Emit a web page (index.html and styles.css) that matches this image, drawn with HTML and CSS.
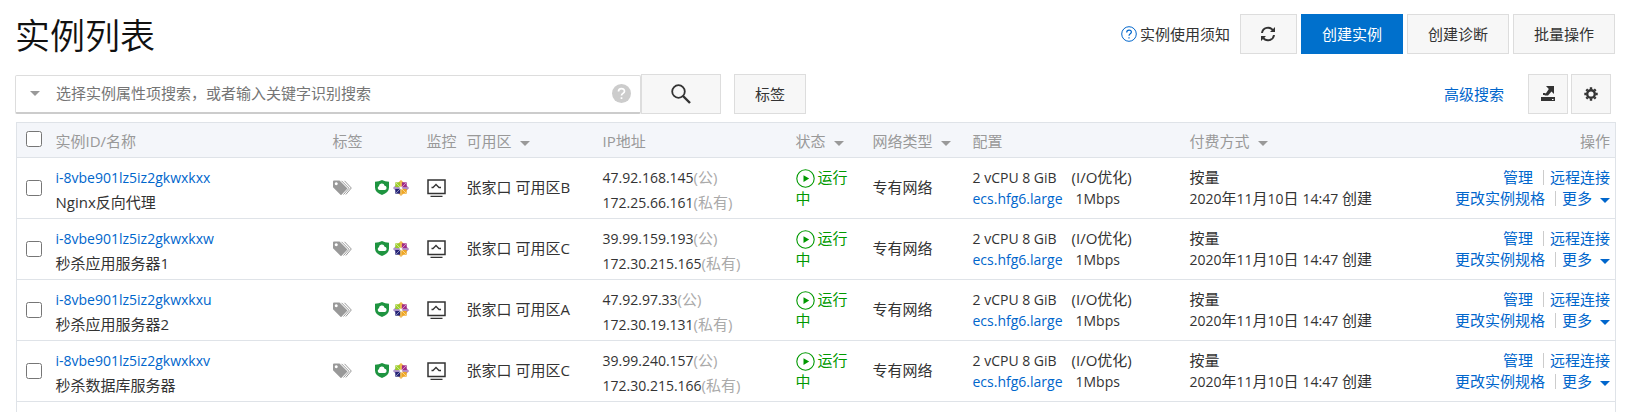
FILE: index.html
```html
<!DOCTYPE html>
<html lang="zh-CN">
<head>
<meta charset="utf-8">
<title>实例列表</title>
<link rel="stylesheet" href="styles.css">
<script src="app.js" defer></script>
</head>
<body>
<svg class="sprite" aria-hidden="true">
  <symbol id="i-tags" viewBox="0 0 19 16">
    <path fill="#999" fill-rule="evenodd" d="M0 1.5Q0 .5 1 .5H6.5L14.5 8.5 8.5 14.8Q8 15.3 7.5 14.8L0 7.3ZM3.2 2.3a1.5 1.5 0 1 0 .1 0Z"/>
    <path fill="none" stroke="#999" d="M8.5.8 16 8.3 10.5 14.5M11.5.8 18.3 8 12.8 14.5"/>
  </symbol>
  <symbol id="i-shield" viewBox="0 0 14 15">
    <path fill="#1e9440" d="M7 0Q10 1.8 14 1.8V7.5Q14 12.5 7 15 0 12.5 0 7.5V1.8Q4 1.8 7 0Z"/>
    <path fill="#fff" d="M4.500 10a2 2 0 0 1-.6-3.800 2.900 2.900 0 0 1 5.700-.5 2.200 2.200 0 0 1 .4 4.300Z"/>
  </symbol>
  <symbol id="i-centos" viewBox="0 0 16 16">
    <path fill="#efa724" d="m8 0 3 3L8 7 5 3Z"/>
    <path fill="#a05fae" d="m16 8-3 3L9 8l4-3Z"/>
    <path fill="#9a80bd" d="m0 8 3-3 4 3-4 3Z"/>
    <path fill="#efb04b" d="m8 16-3-3 3-4 3 4Z"/>
    <path fill="#9ccd2a" d="M2.300 2.300h5v5h-5Z"/>
    <path fill="#a12b88" d="M8.700 2.300h5v5h-5Z"/>
    <path fill="#262577" d="M2.300 8.700h5v5h-5Z"/>
    <path fill="#efa724" d="M8.700 8.700h5v5h-5Z"/>
    <path stroke="#fff" stroke-opacity=".7" stroke-width=".7" fill="none" d="M3 3l10 10M13 3 3 13"/>
    <path fill="#efc060" d="M7.300 1h1.400v5H7.300Z"/>
    <path fill="#b79bd0" d="M1 7.300h5v1.400H1ZM10 7.300h5v1.400h-5Z"/>
    <path fill="#efc060" d="M7.300 10h1.400v5H7.300Z"/>
  </symbol>
  <symbol id="i-monitor" viewBox="0 0 19 18">
    <path fill="none" stroke="#333" stroke-width="1.500" d="M1 1h17v13.500H1Z"/>
    <path fill="none" stroke="#333" stroke-width="1.300" d="M4.500 8.500H6L9 5.500l3 3h2M3.500 17.300h12"/>
  </symbol>
  <symbol id="i-run" viewBox="0 0 19 19">
    <circle cx="9.500" cy="9.500" r="8.700" fill="none" stroke="#090" stroke-width="1.100"/>
    <path fill="#090" d="m7.500 6.200 5.700 3.400-5.700 3.400Z"/>
  </symbol>
</svg>

<header class="head">
  <h1>实例列表</h1>
  <div class="head-actions">
    <a class="notice" href="#">
      <svg width="16" height="16" viewBox="0 0 16 16" aria-hidden="true"><circle cx="8" cy="8" r="7.300" fill="none" stroke="#06c"/><path d="M5.700 6.400C5.700 3.300 10.400 3.400 10.400 6.100 10.400 7.900 8 7.700 8 9.800M8 11.200v1.300" fill="none" stroke="#06c" stroke-width="1.200"/></svg>
      <span>实例使用须知</span>
    </a>
    <button class="btn refresh" type="button" aria-label="刷新">
      <svg width="16" height="16" viewBox="0 0 16 16" fill="none" stroke="#333" stroke-width="2" aria-hidden="true"><path d="M2 7A6 6 0 0 1 13 4.500M14 9A6 6 0 0 1 3 11.500"/><path fill="#333" stroke="none" d="M15 1v5H10ZM1 15v-5H6Z"/></svg>
    </button>
    <button class="btn primary" type="button">创建实例</button>
    <button class="btn" type="button">创建诊断</button>
    <button class="btn" type="button">批量操作</button>
  </div>
</header>

<div class="toolbar">
  <form class="search" onsubmit="return false">
    <div class="field">
      <span class="caret"></span>
      <input type="text" aria-label="搜索实例" placeholder="选择实例属性项搜索，或者输入关键字识别搜索">
      <svg width="19" height="19" viewBox="0 0 19 19" aria-hidden="true"><circle cx="9.500" cy="9.500" r="9.500" fill="#ccc"/><path d="M6.500 7.500C6.500 3.800 12.500 3.800 12.500 7.200 12.500 9.500 9.500 9.300 9.500 11.600M9.500 13.200v1.800" fill="none" stroke="#fff" stroke-width="1.700"/></svg>
    </div>
    <button class="btn find" type="submit" aria-label="搜索">
      <svg width="20" height="20" viewBox="0 0 20 20" fill="none" stroke="#333" aria-hidden="true"><circle cx="7.500" cy="7.500" r="6.300" stroke-width="1.800"/><path stroke-width="2.400" d="m12 12 7 7"/></svg>
    </button>
  </form>
  <button class="btn tag-btn" type="button">标签</button>
  <a class="advanced" href="#">高级搜索</a>
  <div class="tools">
    <button class="btn square" type="button" aria-label="导出">
      <svg width="14" height="16" viewBox="0 0 14 16" fill="#333" aria-hidden="true"><path d="M5 0h8v8l-2.500-2.500L7 9.500H3.500L7.800 3ZM2 7h2.500v2H2ZM0 11h14v4H0Z"/><path fill="#fff" d="M11 13h1.500v1H11Z"/></svg>
    </button>
    <button class="btn square" type="button" aria-label="设置">
      <svg width="14" height="14" viewBox="0 0 14 14" aria-hidden="true"><circle cx="7" cy="7" r="3.800" fill="none" stroke="#333" stroke-width="2.400"/><path stroke="#333" stroke-width="2.400" d="M7 .3v2M7 11.700v2M.3 7h2M11.700 7h2M2.300 2.300l1.400 1.400M10.300 10.300l1.400 1.400M2.300 11.700l1.400-1.400M10.300 3.700l1.400-1.400"/></svg>
    </button>
  </div>
</div>

<div class="list-wrap">
<table class="list">
  <colgroup>
    <col class="c-check"><col class="c-name"><col class="c-tag"><col class="c-mon"><col class="c-zone"><col class="c-ip"><col class="c-state"><col class="c-net"><col class="c-conf"><col class="c-pay"><col class="c-op">
  </colgroup>
  <thead>
    <tr>
      <th class="check"><input type="checkbox" aria-label="全选"></th>
      <th>实例ID/名称</th>
      <th>标签</th>
      <th>监控</th>
      <th>可用区<span class="caret"></span></th>
      <th>IP地址</th>
      <th>状态<span class="caret"></span></th>
      <th>网络类型<span class="caret"></span></th>
      <th>配置</th>
      <th>付费方式<span class="caret"></span></th>
      <th class="ops">操作</th>
    </tr>
  </thead>
  <tbody id="rows"></tbody>
</table>
</div>
</body>
</html>
```

FILE: styles.css
```css
* {
  box-sizing: border-box;
}

body {
  margin: 0;
  padding: 14px 10px 0 15px;
  background: #fff;
  color: #333;
  font-family: "Open Sans", "Noto Sans CJK SC", sans-serif;
  font-size: 15px;
  line-height: 21px;
}

a {
  color: #06c;
  text-decoration: none;
}

svg {
  flex: none;
}

.sprite {
  display: none;
}

.head {
  display: flex;
  justify-content: space-between;
  height: 60px;
}

h1 {
  margin: 0;
  color: #111;
  font-size: 35px;
  font-weight: 350;
  line-height: 44px;
}

.head-actions {
  display: flex;
  align-items: flex-start;
  gap: 4px;
}

.notice {
  display: flex;
  align-items: center;
  gap: 3px;
  height: 40px;
  margin-right: 6px;
}

.notice span {
  color: #333;
}

.btn {
  display: flex;
  align-items: center;
  justify-content: center;
  height: 40px;
  padding: 0 20px;
  border: 1px solid #ddd;
  background: #f7f7f7;
  color: #333;
  font: inherit;
}

.refresh {
  width: 57px;
}

.primary {
  border-color: #0070cc;
  background: #0070cc;
  color: #fff;
}

.toolbar {
  display: flex;
  align-items: center;
  height: 40px;
}

.search {
  display: flex;
  flex: 0 1 706px;
  align-items: center;
}

.field {
  display: flex;
  flex: 1;
  align-items: center;
  height: 39px;
  padding: 0 9px 0 14px;
  border: 1px solid #ddd;
  border-bottom: 2px solid #ccc;
  border-radius: 2px;
}

.field input {
  flex: 1;
  min-width: 0;
  margin-left: 16px;
  padding: 0;
  border: 0;
  outline: 0;
  font: inherit;
}

.field input::placeholder {
  color: #757575;
}

.field .caret {
  margin: 0;
}

.find {
  width: 80px;
}

.tag-btn {
  width: 72px;
  margin-left: 13px;
  padding: 0;
}

.advanced {
  margin-left: auto;
}

.tools {
  display: flex;
  gap: 3px;
  margin: 0 4px 0 24px;
}

.square {
  width: 40px;
  padding: 0;
}

.caret {
  display: inline-block;
  margin-left: 8px;
  border: 5px solid transparent;
  border-top-color: #999;
  border-bottom: 0;
  vertical-align: 1px;
}

.list-wrap {
  padding: 8px 0 0 1px;
}

.list {
  width: 100%;
  border: 1px solid #dfe3e8;
  border-bottom: 0;
  border-collapse: collapse;
  table-layout: fixed;
}

.c-check { width: 39px; }
.c-name { width: 277px; }
.c-tag { width: 94px; }
.c-mon { width: 40px; }
.c-zone { width: 136px; }
.c-ip { width: 193px; }
.c-state { width: 77px; }
.c-net { width: 100px; }
.c-conf { width: 217px; }
.c-pay { width: 230px; }
.c-op { width: 196px; }

th,
td {
  height: 61px;
  padding: 0 0 1px;
  border-bottom: 1px solid #dfe3e8;
  text-align: left;
  vertical-align: middle;
  white-space: nowrap;
}

th {
  height: 35px;
  padding: 2px 0 0;
  background: #f4f6fa;
  color: #999;
  font-weight: 400;
}

.next td {
  height: 10px;
  border-bottom: 0;
}

.check {
  padding-left: 9px;
}

th.check {
  padding-top: 0;
  padding-bottom: 2px;
}

.check input {
  display: block;
  width: 16px;
  height: 16px;
  margin: 0;
}

.pair {
  padding-top: 4px;
  padding-bottom: 0;
  line-height: 25px;
}

.latin {
  font-size: 14px;
}

.muted {
  color: #aaa;
}

.marks,
.mon {
  display: flex;
  align-items: center;
}

.shield {
  margin: 0 4px 0 23px;
}

.state {
  padding-right: 14px;
  color: #090;
  white-space: normal;
}

.state svg {
  margin-right: 3px;
  vertical-align: -5px;
}

.mbps {
  margin-left: 13px;
}

.opt {
  margin-left: 11px;
}

.ops {
  padding-right: 5px;
  text-align: right;
}

.ops i {
  display: inline-block;
  width: 1px;
  height: 15px;
  margin: 0 6px 0 10px;
  background: #ccc;
  vertical-align: -2px;
}

.ops .caret {
  border-top-color: #06c;
}
```

FILE: app.js
```js
const instances = [
  ["i-8vbe901lz5iz2gkwxkxx", "Nginx反向代理", "B", "47.92.168.145", "172.25.66.161"],
  ["i-8vbe901lz5iz2gkwxkxw", "秒杀应用服务器1", "C", "39.99.159.193", "172.30.215.165"],
  ["i-8vbe901lz5iz2gkwxkxu", "秒杀应用服务器2", "A", "47.92.97.33", "172.30.19.131"],
  ["i-8vbe901lz5iz2gkwxkxv", "秒杀数据库服务器", "C", "39.99.240.157", "172.30.215.166"]
];

const icon = (id, w, h, cls = "") =>
  `<svg class="${cls}" width="${w}" height="${h}" aria-hidden="true"><use href="#i-${id}"/></svg>`;

const row = ([id, name, zone, pub, priv]) => `
  <tr>
    <td class="check"><input type="checkbox" aria-label="${id}"></td>
    <td class="pair"><a class="latin" href="#">${id}</a><br>${name}</td>
    <td><div class="marks">${icon("tags", 19, 16)}${icon("shield", 14, 15, "shield")}${icon("centos", 16, 16)}</div></td>
    <td><div class="mon">${icon("monitor", 19, 18)}</div></td>
    <td>张家口 可用区${zone}</td>
    <td class="pair"><span class="latin">${pub}</span><span class="muted">(公)</span><br><span class="latin">${priv}</span><span class="muted">(私有)</span></td>
    <td class="state">${icon("run", 19, 19)}运行中</td>
    <td>专有网络</td>
    <td><span class="latin">2 vCPU 8 GiB</span> <span class="opt">(I/O优化)</span><br><a class="latin" href="#">ecs.hfg6.large</a><span class="latin mbps">1Mbps</span></td>
    <td>按量<br><span class="latin">2020</span>年<span class="latin">11</span>月<span class="latin">10</span>日 <span class="latin">14:47</span> 创建</td>
    <td class="ops"><a href="#">管理</a><i></i><a href="#">远程连接</a><br><a href="#">更改实例规格</a><i></i><a href="#">更多<span class="caret"></span></a></td>
  </tr>`;

document.getElementById("rows").innerHTML =
  instances.map(row).join("") + `<tr class="next">${"<td></td>".repeat(11)}</tr>`;
```
